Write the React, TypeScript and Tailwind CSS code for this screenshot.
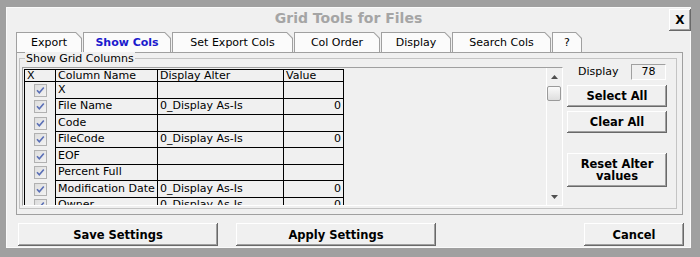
import React from "react";

type Row = { name: string; alter: string; value: string };

const ROWS: Row[] = [
  { name: "X", alter: "", value: "" },
  { name: "File Name", alter: "0_Display As-Is", value: "0" },
  { name: "Code", alter: "", value: "" },
  { name: "FileCode", alter: "0_Display As-Is", value: "0" },
  { name: "EOF", alter: "", value: "" },
  { name: "Percent Full", alter: "", value: "" },
  { name: "Modification Date", alter: "0_Display As-Is", value: "0" },
  { name: "Owner", alter: "0_Display As-Is", value: "0" },
];

const TABS = [
  { label: "Export", w: "w-[66px]" },
  { label: "Show Cols", w: "w-[88px]", active: true },
  { label: "Set Export Cols", w: "w-[121px]" },
  { label: "Col Order", w: "w-[86px]" },
  { label: "Display", w: "w-[70px]" },
  { label: "Search Cols", w: "w-[99px]" },
  { label: "?", w: "w-[30px]" },
];

const raised =
  "bg-[#f0f0f0] shadow-[inset_-1px_-1px_0_#696969,inset_1px_1px_0_#ffffff,inset_-2px_-2px_0_#a0a0a0]";

function Btn({ className, children }: { className: string; children: React.ReactNode }) {
  return (
    <button
      type="button"
      className={`flex flex-col items-center justify-center text-center text-[11.5px] font-bold leading-[12px] text-black ${raised} ${className}`}
    >
      {children}
    </button>
  );
}

function Check() {
  return (
    <svg width="13" height="13" viewBox="0 0 13 13">
      <defs>
        <linearGradient id="cb" x1="0" y1="0" x2="1" y2="1">
          <stop offset="0" stopColor="#dcdcdc" />
          <stop offset="1" stopColor="#f4f4f4" />
        </linearGradient>
      </defs>
      <rect x="0.5" y="0.5" width="12" height="12" fill="url(#cb)" stroke="#b1b1b1" />
      <path d="M3 6.3 L5.3 8.8 L9.8 3.4" fill="none" stroke="#5a6fb6" strokeWidth="1.6" />
    </svg>
  );
}

function Arrow({ down }: { down?: boolean }) {
  return (
    <svg width="7" height="4" viewBox="0 0 7 4">
      <polygon points={down ? "0,0 7,0 3.5,4" : "0,4 7,4 3.5,0"} fill="#505050" />
    </svg>
  );
}

export default function App() {
  return (
    <div className="w-[700px] h-[257px] bg-[#a0a0a0] pl-[6px] pt-[7px] pr-[9px] pb-[9px] font-['DejaVu_Sans',sans-serif] text-[11px] text-black">
      <div className="relative h-full border border-[#fafafa] bg-[#f0f0f0] flex flex-col">
        {/* Title */}
        <div className="h-[24px] pt-[2px] text-center text-[14px] font-bold leading-[16px] text-[#a5a5a5]">
          Grid Tools for Files
        </div>
        <button
          type="button"
          className={`absolute right-[-1px] top-[1px] w-[22px] h-[22px] flex items-center justify-center text-[12px] font-bold ${raised}`}
        >
          X
        </button>

        {/* Tabs */}
        <div className="flex h-[20px] pl-[9px] gap-[1px]">
          {TABS.map((t) => (
            <div
              key={t.label}
              className={`${t.w} h-[20px] bg-[#a0a0a0] px-[1px] pt-[1px] [clip-path:polygon(0_0,calc(100%_-_6px)_0,100%_6px,100%_100%,0_100%)]`}
            >
              <div
                className={`h-full flex items-center justify-center pt-[2px] bg-[#fbfbfb] [clip-path:polygon(0_0,calc(100%_-_5.4px)_0,100%_5.4px,100%_100%,0_100%)] ${
                  t.active ? "font-bold text-[#1a1acd]" : ""
                }`}
              >
                {t.label}
              </div>
            </div>
          ))}
        </div>

        {/* Tab panel */}
        <div className="ml-[9px] w-[667px] h-[163px] border border-[#a0a0a0] pl-[2px] pt-[5px]">
          {/* Group box */}
          <div className="relative w-[658px] h-[151px] border border-[#c4c4c4] flex items-start pl-[2px]">
            <span className="absolute left-[5px] top-[-7px] px-[1px] bg-[#f0f0f0] leading-[13px]">
              Show Grid Columns
            </span>

            {/* Grid */}
            <div className="mt-[8px] w-[541px] h-[139px] border border-t-[#a0a0a0] border-l-[#a0a0a0] border-b-white border-r-white flex">
              <div className="flex-1 overflow-hidden pl-[1px] pt-[1px]">
                <div className="w-fit border-l border-black">
                  <div className="flex h-[13px] border-t border-b border-black leading-[11px]">
                    <div className="w-[31px] border-r border-black pl-[2px]">X</div>
                    <div className="w-[102px] border-r border-black pl-[2px]">Column Name</div>
                    <div className="w-[126px] border-r border-black pl-[2px]">Display Alter</div>
                    <div className="w-[60px] border-r border-black pl-[2px]">Value</div>
                  </div>
                  {ROWS.map((r) => (
                    <div key={r.name} className="flex h-[16.5px] whitespace-nowrap">
                      <div className="w-[31px] border-r border-black flex items-center justify-center">
                        <Check />
                      </div>
                      <div className="w-[102px] border-r border-b border-black pl-[2px] flex items-center">
                        {r.name}
                      </div>
                      <div className="w-[126px] border-r border-b border-black pl-[2px] flex items-center">
                        {r.alter}
                      </div>
                      <div className="w-[60px] border-r border-b border-black pr-[2px] flex items-center justify-end">
                        {r.value}
                      </div>
                    </div>
                  ))}
                </div>
              </div>
              {/* Scrollbar */}
              <div className="w-[16px] border-l border-white flex flex-col items-center pt-[7px] pb-[6px]">
                <Arrow />
                <div className="self-start mt-[7px] w-[14px] h-[15px] rounded-[2px] border border-[#9a9a9a] bg-linear-to-b from-[#fafafa] to-[#dedede]" />
                <div className="flex-1" />
                <Arrow down />
              </div>
            </div>

            {/* Right side controls */}
            <div className="mt-[5px] ml-[4px] w-[100px] flex flex-col">
              <div className="h-[16px] flex items-center justify-between pl-[11px] pr-[1px]">
                <span>Display</span>
                <div className="w-[35px] h-[16px] border border-t-[#a0a0a0] border-l-[#a0a0a0] border-b-white border-r-white flex items-center justify-center">
                  78
                </div>
              </div>
              <Btn className="mt-[5px] h-[22px]">Select All</Btn>
              <Btn className="mt-[4px] h-[22px]">Clear All</Btn>
              <Btn className="mt-[20px] h-[34px]">
                <span className="block leading-[12px]">Reset Alter</span>
                <span className="block leading-[12px]">values</span>
              </Btn>
            </div>
          </div>
        </div>

        {/* Bottom buttons */}
        <div className="mt-[8px] flex pl-[11px]">
          <Btn className="w-[200px] h-[23px]">Save Settings</Btn>
          <Btn className="ml-[18px] w-[200px] h-[23px]">Apply Settings</Btn>
          <Btn className="ml-auto mr-[6px] w-[100px] h-[23px]">Cancel</Btn>
        </div>
      </div>
    </div>
  );
}
